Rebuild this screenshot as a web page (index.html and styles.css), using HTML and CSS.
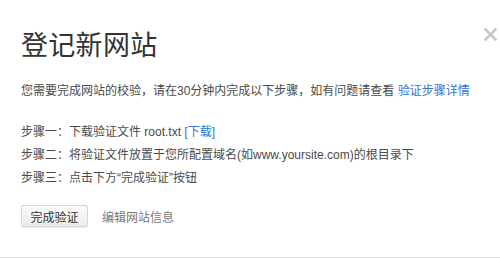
FILE: index.html
```html
<!DOCTYPE html>
<html lang="zh-CN">
<head>
<meta charset="utf-8">
<title>登记新网站</title>
<link rel="stylesheet" href="styles.css">
</head>
<body>
<div class="dialog">
  <h1 class="title">登记新网站</h1>
  <p class="intro">您需要完成网站的校验，请在30分钟内完成以下步骤，如有问题请查看 <a class="link" href="#">验证步骤详情</a></p>
  <ul class="steps">
    <li>步骤一：下载验证文件 root.txt <a class="link" href="#">[下载]</a></li>
    <li>步骤二：将验证文件放置于您所配置域名(如www.yoursite.com)的根目录下</li>
    <li>步骤三：点击下方“完成验证”按钮</li>
  </ul>
  <div class="actions">
    <button class="btn" type="button">完成验证</button>
    <a class="edit" href="#">编辑网站信息</a>
  </div>
  <span class="close" aria-label="关闭">
    <svg width="13" height="13" viewBox="0 0 13 13"><path d="M1.5 1.5 L11.5 11.5 M11.5 1.5 L1.5 11.5" stroke="#c8c8c8" stroke-width="2.6" stroke-linecap="square"/></svg>
  </span>
</div>
</body>
</html>
```

FILE: styles.css
```css
html, body {
  margin: 0;
  padding: 0;
  background: #fff;
}
body {
  font-family: "Liberation Sans", "Noto Sans CJK SC", sans-serif;
  color: #4a4a4a;
  font-size: 12px;
}
.dialog {
  position: relative;
  box-sizing: border-box;
  height: 258px;
  padding: 26px 21px 0;
  border-bottom: 1px solid #dcdcdc;
}
.title {
  margin: 0;
  font-family: "Noto Sans CJK SC", sans-serif;
  font-weight: normal;
  font-size: 27px;
  line-height: 36px;
  color: #333;
  letter-spacing: 0.3px;
}
.intro {
  margin: 19px 0 0;
  line-height: 20px;
}
.link {
  color: #2f76d0;
  text-decoration: none;
}
.steps {
  list-style: none;
  margin: 20px 0 0;
  padding: 0;
  line-height: 23px;
}
.actions {
  margin-top: 15px;
  display: flex;
  align-items: center;
  gap: 14px;
}
.btn {
  box-sizing: border-box;
  height: 22px;
  width: 67px;
  padding: 0;
  font-family: "Liberation Sans", "Noto Sans CJK SC", sans-serif;
  font-size: 12px;
  color: #333;
  background: linear-gradient(#fafafa, #ececec);
  border: 1px solid #d6d6d6;
  border-radius: 2px;
  box-shadow: 0 1px 1px rgba(0,0,0,0.06);
}
.edit {
  color: #777;
  text-decoration: none;
}
.close {
  position: absolute;
  top: 28px;
  right: 3px;
  width: 13px;
  height: 13px;
  display: block;
}
.close svg {
  display: block;
}
```
